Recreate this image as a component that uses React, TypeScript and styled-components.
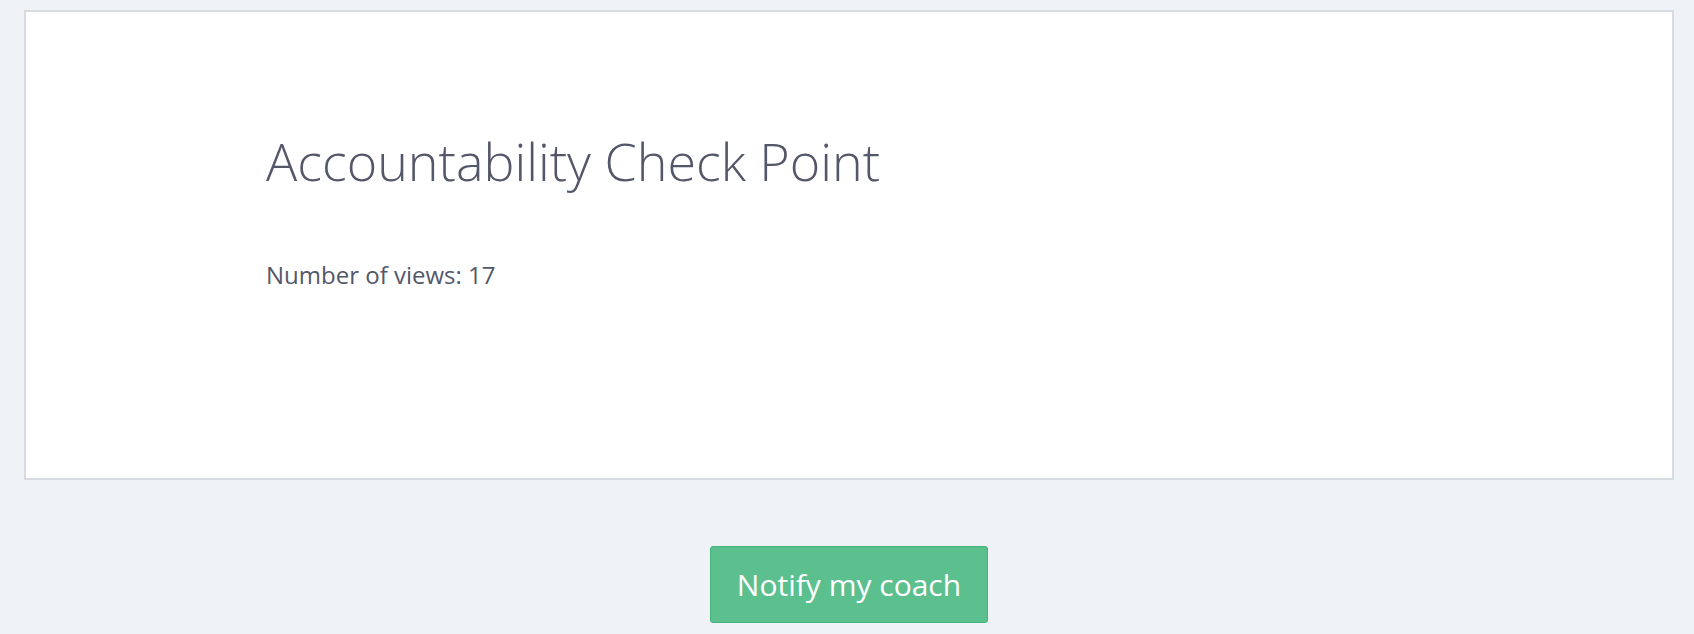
import React from "react";
import styled, { createGlobalStyle } from "styled-components";

const Global = createGlobalStyle`
  html, body {
    margin: 0;
    padding: 0;
    background: #eff3f6;
    font-family: "Open Sans", "Liberation Sans", sans-serif;
    color: #545769;
  }
`;

const Page = styled.div`
  padding: 10px 20px 0 24px;
  display: flex;
  flex-direction: column;
`;

const Card = styled.section`
  background: #ffffff;
  border: 2px solid #d6dce1;
  height: 470px;
  box-sizing: border-box;
  padding: 118px 0 0 240px;
`;

const Title = styled.h1`
  margin: 0;
  font-weight: 300;
  font-size: 52px;
  line-height: 1.2;
  color: #545769;
`;

const Meta = styled.p`
  margin: 65px 0 0;
  font-size: 24px;
  line-height: 1.5;
  font-weight: 400;
  color: #545769;
`;

const Actions = styled.div`
  display: flex;
  justify-content: center;
  padding-top: 66px;
`;

const Button = styled.button`
  font-family: "Open Sans", "Liberation Sans", sans-serif;
  font-size: 30px;
  line-height: 48px;
  font-weight: 400;
  color: #ffffff;
  background: #5bbf8e;
  border: 1px solid #43b37c;
  border-radius: 3px;
  padding: 14px 26px 13px;
  cursor: pointer;
`;

export default function App() {
  return (
    <>
      <Global />
      <Page>
        <Card>
          <Title>Accountability Check Point</Title>
          <Meta>Number of views: 17</Meta>
        </Card>
        <Actions>
          <Button>Notify my coach</Button>
        </Actions>
      </Page>
    </>
  );
}
